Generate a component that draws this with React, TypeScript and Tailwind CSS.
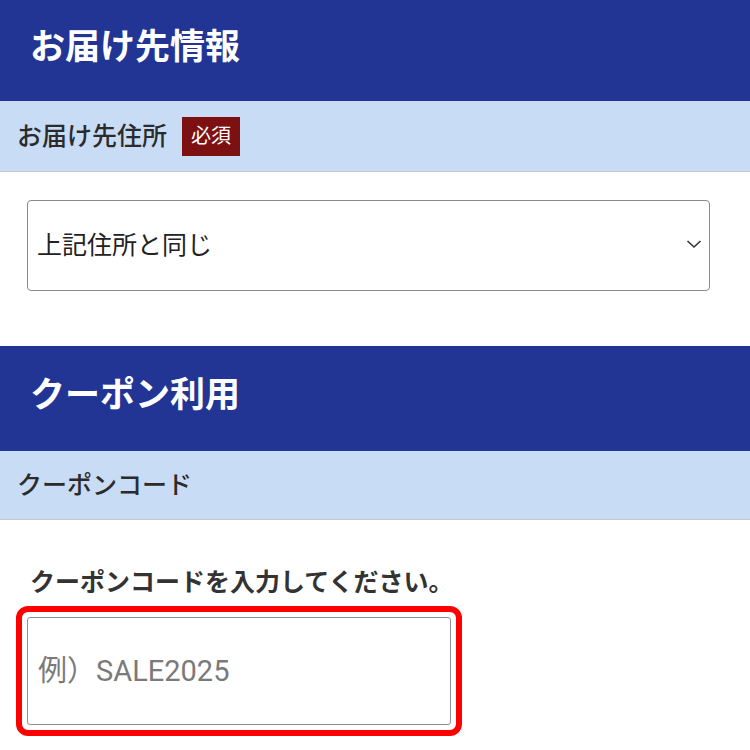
import React from 'react';

const font = { fontFamily: 'Roboto, "Noto Sans CJK JP", sans-serif' };

function SectionHeader({ title, tall }: { title: string; tall?: boolean }) {
  return (
    <div
      className={`${tall ? 'h-[105px]' : 'h-[101px]'} bg-[#223594] flex items-center px-[30px] pb-[6px]`}
    >
      <h2 className="text-[35px] font-bold text-white leading-none">{title}</h2>
    </div>
  );
}

function SubHeader({ label, required, tall }: { label: string; required?: boolean; tall?: boolean }) {
  return (
    <div
      className={`${tall ? 'h-[71px]' : 'h-[69px]'} bg-[#c9dcf6] border-b border-[#c8c8c8] flex items-center pl-[17px] gap-[15px]`}
    >
      <span className="text-[25px] font-medium text-[#2b2b2b] leading-none">{label}</span>
      {required && (
        <span className="h-[39px] px-[9px] bg-[#7d1111] text-white text-[20px] leading-none flex items-center">
          必須
        </span>
      )}
    </div>
  );
}

export default function App() {
  return (
    <div className="w-[750px] min-h-[750px] bg-white" style={font}>
      <SectionHeader title="お届け先情報" />
      <SubHeader label="お届け先住所" required tall />
      <div className="pt-[28px] pb-[55px] px-[27px]">
        <div className="relative w-[683px]">
          <select
            defaultValue="same"
            className="w-full h-[91px] appearance-none border border-[#8a8a8a] rounded-[4px] bg-white pl-[9px] text-[25px] text-[#222] outline-none"
          >
            <option value="same">上記住所と同じ</option>
            <option value="other">別の住所を指定</option>
          </select>
          <svg
            className="absolute right-[8px] top-[39px] pointer-events-none"
            width="16"
            height="10"
            viewBox="0 0 16 10"
            fill="none"
          >
            <path d="M1.5 2 L8 8 L14.5 2" stroke="#333" strokeWidth="1.6" />
          </svg>
        </div>
      </div>

      <SectionHeader title="クーポン利用" tall />
      <SubHeader label="クーポンコード" />
      <div className="pt-[50px] pb-[20px]">
        <p className="pl-[30px] text-[25px] font-bold text-[#333] leading-none">
          クーポンコードを入力してください。
        </p>
        <div className="mt-[11px] ml-[16px] w-[446px] h-[130px] border-[6px] border-[#ff0000] rounded-[12px] p-[5px]">
          <input
            type="text"
            placeholder="例）SALE2025"
            className="w-full h-full border border-[#8f8f99] rounded-[3px] pl-[10px] text-[29px] text-[#222] placeholder:text-[#7a7a7a] outline-none"
          />
        </div>
      </div>
    </div>
  );
}
